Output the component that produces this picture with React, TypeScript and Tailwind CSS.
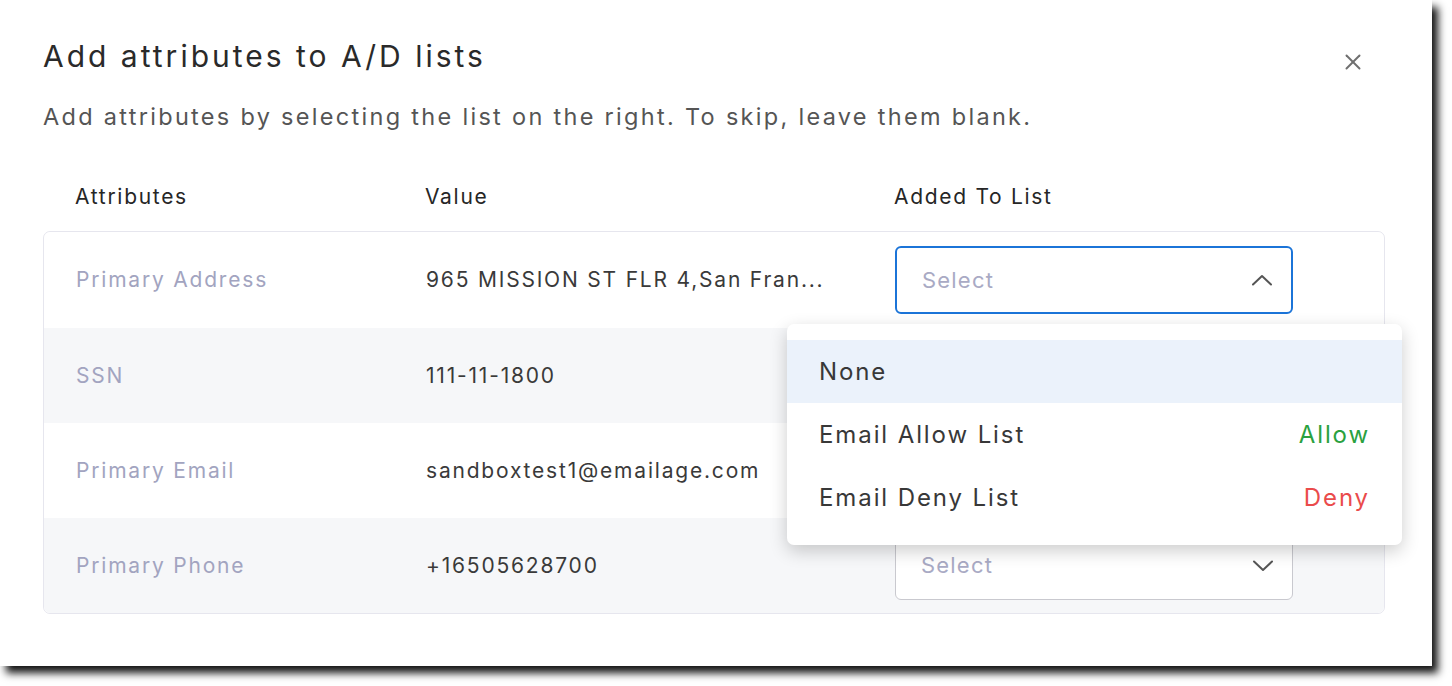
import { X } from 'lucide-react'

const ROWS: { label: string; value: string; open?: boolean }[] = [
  { label: 'Primary Address', value: '965 MISSION ST FLR 4,San Fran...', open: true },
  { label: 'SSN', value: '111-11-1800' },
  { label: 'Primary Email', value: 'sandboxtest1@emailage.com' },
  { label: 'Primary Phone', value: '+16505628700' },
]

const OPTIONS: { label: string; tag?: string; tone?: string; active?: boolean }[] = [
  { label: 'None', active: true },
  { label: 'Email Allow List', tag: 'Allow', tone: 'text-[#2aa140]' },
  { label: 'Email Deny List', tag: 'Deny', tone: 'text-[#ea4b4b]' },
]

function Chevron({ up }: { up?: boolean }) {
  return (
    <svg width="22" height="12" viewBox="0 0 22 12" fill="none" className="text-[#555]">
      <path
        d={up ? 'M2 10.5 L11 2 L20 10.5' : 'M2 1.5 L11 10 L20 1.5'}
        stroke="currentColor"
        strokeWidth="2"
        strokeLinecap="round"
        strokeLinejoin="round"
      />
    </svg>
  )
}

function SelectBox({ open }: { open?: boolean }) {
  return (
    <div className="relative w-[398px]">
      <div
        className={`h-[68px] rounded-[6px] bg-white flex items-center justify-between pl-[25px] pr-[18px] ${
          open ? 'border-2 border-[#1b74d8]' : 'border border-[#c9c9cf]'
        }`}
      >
        <span className="text-[22px] tracking-[1.2px] text-[#a9aac4]">Select</span>
        <Chevron up={open} />
      </div>

      {open && (
        <div className="absolute z-10 left-[-108px] top-[78px] w-[615px] bg-white rounded-[7px] py-[16px] shadow-[0_6px_18px_rgba(0,0,0,0.2)]">
          {OPTIONS.map(({ label, tag, tone, active }) => (
            <div
              key={label}
              className={`h-[63px] flex items-center justify-between pl-[32px] pr-[32px] tracking-[1.9px] ${
                active ? 'bg-[#ebf2fb]' : ''
              }`}
            >
              <span className="text-[24px] text-[#383838]">{label}</span>
              {tag && <span className={`text-[24px] ${tone}`}>{tag}</span>}
            </div>
          ))}
        </div>
      )}
    </div>
  )
}

export default function App() {
  return (
    <div className="w-[1452px] h-[686px] bg-white" style={{ fontFamily: 'Inter, "Noto Sans", sans-serif' }}>
      <div className="relative w-[1432px] h-[666px] bg-white pl-[43px] pr-[47px] pt-[34px] shadow-[6px_7px_8px_rgba(0,0,0,0.92)]">
        <button type="button" className="absolute right-[66px] top-[49px] text-[#6f6f6f]">
          <X size={26} strokeWidth={1.8} />
        </button>

        <h1 className="text-[30px] leading-[44px] tracking-[3px] text-[#2a2a2a]">Add attributes to A/D lists</h1>
        <p className="mt-[23px] text-[23.5px] leading-[32px] tracking-[2.3px] text-[#555]">
          Add attributes by selecting the list on the right. To skip, leave them blank.
        </p>

        {/* column headings */}
        <div className="mt-[44px] h-[40px] flex items-center pl-[32px] text-[21px] tracking-[1.7px] text-[#262626]">
          <span className="w-[350px]">Attributes</span>
          <span className="w-[469px]">Value</span>
          <span>Added To List</span>
        </div>

        {/* table */}
        <div className="mt-[14px] border border-[#e6e6ee] rounded-[7px] tracking-[1.8px]">
          {ROWS.map(({ label, value, open }, i) => (
            <div
              key={label}
              className={`flex items-center pl-[32px] ${i % 2 === 1 ? 'bg-[#f6f7f9]' : 'bg-white'} ${
                i === 0 ? 'rounded-t-[7px] h-[96px]' : 'h-[95px]'
              } ${i === ROWS.length - 1 ? 'rounded-b-[7px]' : ''}`}
            >
              <span className="w-[350px] text-[21px] text-[#a2a4c0]">{label}</span>
              <span className="w-[469px] text-[21px] text-[#3a3a3a]">{value}</span>
              <SelectBox open={open} />
            </div>
          ))}
        </div>
      </div>
    </div>
  )
}
